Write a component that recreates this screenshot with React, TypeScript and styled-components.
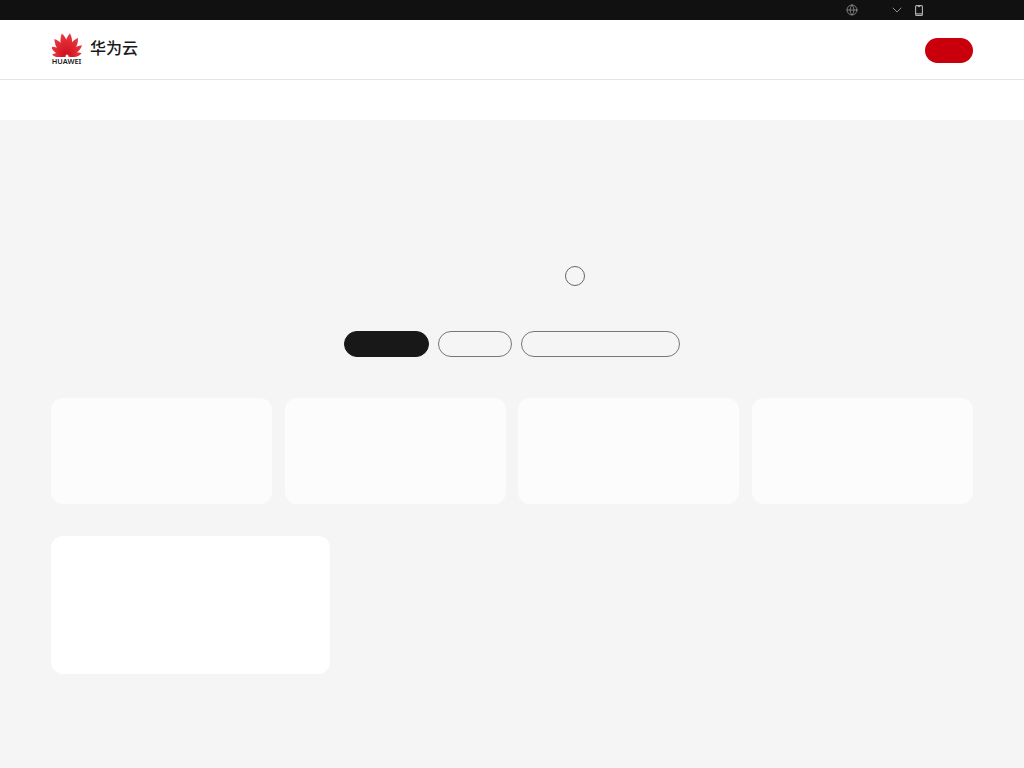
import React from "react";
import styled, { createGlobalStyle } from "styled-components";
import { Globe, ChevronDown } from "lucide-react";

const Global = createGlobalStyle`
  html, body { margin: 0; padding: 0; background: #fff; }
  body { font-family: "Noto Sans", "Noto Sans CJK SC", sans-serif; }
`;

const Page = styled.div`
  width: 1024px;
  height: 768px;
  display: flex;
  flex-direction: column;
  overflow: hidden;
`;

const TopBar = styled.div`
  height: 20px;
  flex: none;
  background: #111111;
  color: #9a9a9a;
  display: flex;
  align-items: center;
  padding-left: 846px;
`;

const TopIcon = styled.span<{ $gap?: number }>`
  display: flex;
  margin-left: ${(p) => p.$gap ?? 0}px;
`;

const Header = styled.header`
  height: 60px;
  flex: none;
  box-sizing: border-box;
  background: #fff;
  border-bottom: 1px solid #e3e3e3;
  display: flex;
  align-items: center;
  justify-content: space-between;
  padding: 0 51px;
`;

const Brand = styled.div`
  display: flex;
  align-items: center;
  gap: 8px;
  margin-bottom: 2px;
`;

const LogoMark = styled.div`
  width: 31px;
  display: flex;
  flex-direction: column;
  align-items: center;
`;

const LogoWord = styled.span`
  font-family: "Noto Sans", sans-serif;
  font-size: 7.4px;
  line-height: 8px;
  font-weight: 600;
  color: #222;
`;

const BrandName = styled.span`
  font-family: "Noto Sans CJK SC", sans-serif;
  font-size: 16px;
  line-height: 20px;
  font-weight: 500;
  color: #1a1a1a;
  margin-bottom: 4px;
`;

const CtaButton = styled.div`
  width: 48px;
  height: 25px;
  border-radius: 13px;
  background: #c9000b;
  margin-top: 2px;
`;

const SubNav = styled.div`
  height: 40px;
  flex: none;
  background: #fff;
`;

const Main = styled.main`
  flex: 1;
  background: #f5f5f5;
  padding: 146px 51px 0;
  display: flex;
  flex-direction: column;
`;

const TitleRow = styled.div`
  display: flex;
  justify-content: center;
  align-items: center;
  gap: 6px;
`;

const TitleSpace = styled.div`
  width: 120px;
  height: 20px;
`;

const Ring = styled.div`
  width: 20px;
  height: 20px;
  box-sizing: border-box;
  border: 1px solid #666;
  border-radius: 50%;
`;

const Pills = styled.div`
  margin-top: 45px;
  display: flex;
  justify-content: center;
  gap: 9px;
`;

const Pill = styled.div<{ $w: number; $active?: boolean }>`
  width: ${(p) => p.$w}px;
  height: 26px;
  box-sizing: border-box;
  border-radius: 13px;
  background: ${(p) => (p.$active ? "#181818" : "transparent")};
  border: 1px solid ${(p) => (p.$active ? "#181818" : "#777")};
`;

const CardGrid = styled.div`
  margin-top: 41px;
  display: grid;
  grid-template-columns: repeat(4, 1fr);
  gap: 12.67px;
`;

const Card = styled.div`
  height: 106px;
  border-radius: 12px;
  background: #fcfcfc;
`;

const FeatureCard = styled.div`
  margin-top: 32px;
  width: 279px;
  height: 138px;
  border-radius: 12px;
  background: #fff;
`;

const petals: [number, number][] = [
  [-80, 0.64],
  [-56, 0.8],
  [-33, 0.92],
  [-10, 1],
  [10, 1],
  [33, 0.92],
  [56, 0.8],
  [80, 0.64],
];

function Flower() {
  return (
    <svg width="30" height="24" viewBox="0 0 30 24">
      <defs>
        <linearGradient id="petal" x1="0" y1="0" x2="0" y2="1">
          <stop offset="0" stopColor="#ea3a42" />
          <stop offset="1" stopColor="#d0101e" />
        </linearGradient>
      </defs>
      {petals.map(([angle, scale]) => (
        <path
          key={angle}
          transform={`translate(15 23.5) rotate(${angle}) scale(${scale}) translate(0 -1.5)`}
          d="M0 0 C-5 -5 -5.6 -14 -1.2 -22 C4 -16 3.6 -6 0 0 Z"
          fill="url(#petal)"
        />
      ))}
    </svg>
  );
}

function PhoneIcon() {
  return (
    <svg width="8" height="11" viewBox="0 0 8 11" fill="none">
      <rect x="0.6" y="0.6" width="6.8" height="9.8" rx="1" stroke="#b4b4b4" strokeWidth="1.1" />
      <path d="M1 8.8H7" stroke="#b4b4b4" strokeWidth="1" />
      <path d="M3 1.6H5" stroke="#b4b4b4" strokeWidth="1" />
    </svg>
  );
}

export default function App() {
  return (
    <Page>
      <Global />
      <TopBar>
        <TopIcon>
          <Globe size={12} strokeWidth={1.5} />
        </TopIcon>
        <TopIcon $gap={31}>
          <ChevronDown size={16} strokeWidth={1.4} />
        </TopIcon>
        <TopIcon $gap={10}>
          <PhoneIcon />
        </TopIcon>
      </TopBar>
      <Header>
        <Brand>
          <LogoMark>
            <Flower />
            <LogoWord>HUAWEI</LogoWord>
          </LogoMark>
          <BrandName>华为云</BrandName>
        </Brand>
        <CtaButton />
      </Header>
      <SubNav />
      <Main>
        <TitleRow>
          <TitleSpace />
          <Ring />
        </TitleRow>
        <Pills>
          <Pill $w={85} $active />
          <Pill $w={74} />
          <Pill $w={159} />
        </Pills>
        <CardGrid>
          <Card />
          <Card />
          <Card />
          <Card />
        </CardGrid>
        <FeatureCard />
      </Main>
    </Page>
  );
}
